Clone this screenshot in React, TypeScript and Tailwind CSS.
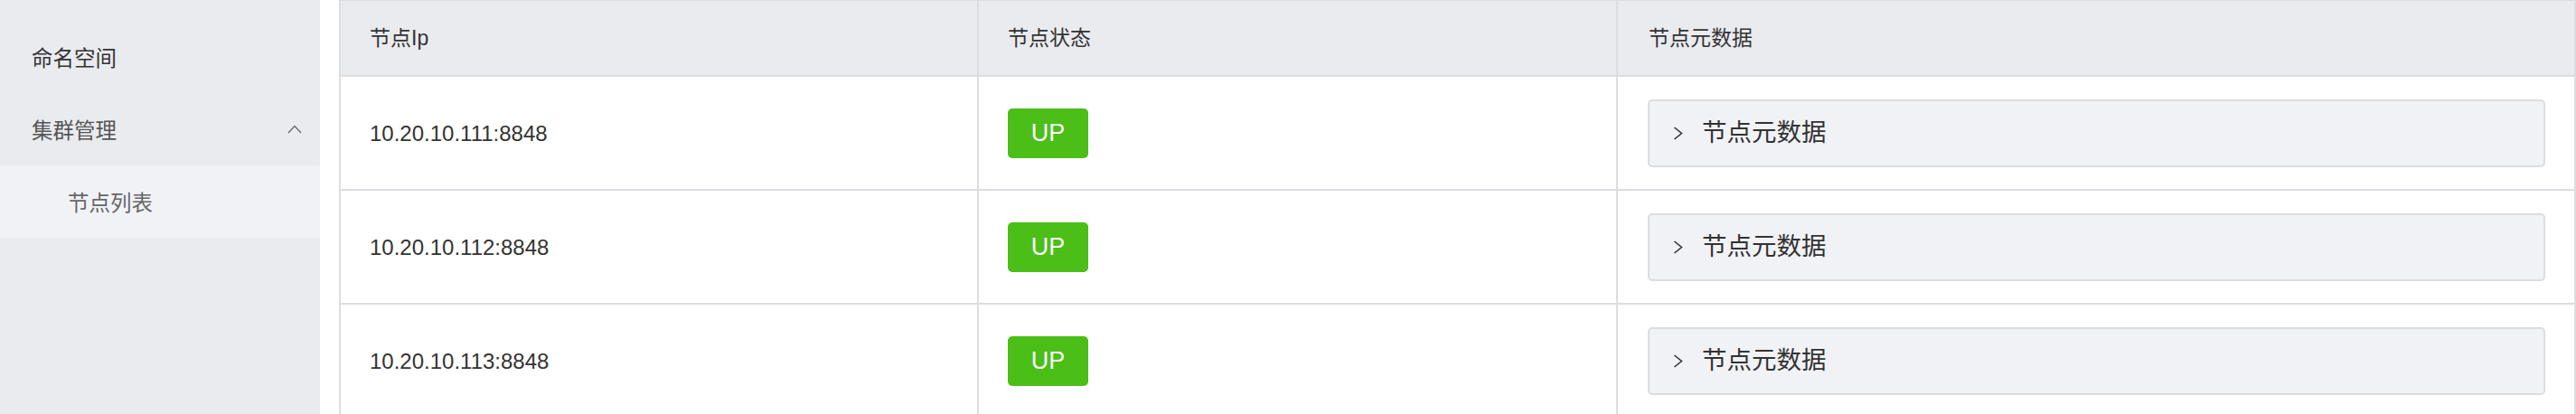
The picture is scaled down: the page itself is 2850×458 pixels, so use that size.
import React from "react";

const font = { fontFamily: '"Liberation Sans", "Noto Sans CJK SC", sans-serif' };

const rows = ["10.20.10.111:8848", "10.20.10.112:8848", "10.20.10.113:8848"];

function ChevronUp() {
  return (
    <svg width="16" height="10" viewBox="0 0 16 10" fill="none">
      <path d="M1 9 L8 1.5 L15 9" stroke="#6b6b6b" strokeWidth="1.4" />
    </svg>
  );
}

function ChevronRight() {
  return (
    <svg width="11" height="15" viewBox="0 0 11 15" fill="none">
      <path d="M1.5 1 L9.5 7.5 L1.5 14" stroke="#333" strokeWidth="1.6" />
    </svg>
  );
}

export default function App() {
  return (
    <div className="flex h-[458px] w-[2850px] overflow-hidden bg-white text-[#333]" style={font}>
      <aside className="w-[354px] shrink-0 bg-[#e9ebef] pt-[23px]">
        <div className="flex h-[80px] items-center pl-[35px] pt-[5px] text-[23.5px] text-[#333]">命名空间</div>
        <div className="flex h-[80px] items-center justify-between pl-[35px] pr-[20px] pt-[5px] text-[23.5px] text-[#555]">
          <span>集群管理</span>
          <span className="-mt-[6px]"><ChevronUp /></span>
        </div>
        <div className="flex h-[80px] items-center bg-[#f1f2f6] pl-[75px] pt-[5px] text-[23.5px] text-[#666]">节点列表</div>
      </aside>
      <main className="ml-[21px] flex-1">
        <div className="border-r-2 border-[#dcdde2]">
          <div className="grid grid-cols-[706px_707px_1fr] border-t border-b-2 border-[#dcdde2] bg-[#eaebef]">
            <div className="flex h-[82px] items-center border-l-2 border-[#dcdde2] pl-[32px] text-[23px] text-[#333]">节点Ip</div>
            <div className="flex h-[82px] items-center border-l-2 border-[#dcdde2] pl-[32px] text-[23px] text-[#333]">节点状态</div>
            <div className="flex h-[82px] items-center border-l-2 border-[#dcdde2] pl-[34px] text-[23px] text-[#333]">节点元数据</div>
          </div>
          {rows.map((ip) => (
            <div key={ip} className="grid grid-cols-[706px_707px_1fr] border-b-2 border-[#dcdde2] bg-white">
              <div className="flex h-[124px] items-center border-l-2 border-[#dcdde2] pl-[32px] pt-[2px] text-[24px] text-[#333]">{ip}</div>
              <div className="flex h-[124px] items-center border-l-2 border-[#dcdde2] pl-[32px]">
                <span className="flex h-[55px] w-[89px] items-center justify-center rounded-[5px] bg-[#4bbe17] text-[27px] text-white">UP</span>
              </div>
              <div className="flex h-[124px] items-center border-l-2 border-[#dcdde2] pl-[33px] pr-[32px]">
                <div className="flex h-[75px] w-full items-center gap-[21px] rounded-[5px] border-2 border-[#dcdde2] bg-[#f1f2f6] pl-[26px] text-[27.5px] text-[#333]">
                  <ChevronRight />
                  <span>节点元数据</span>
                </div>
              </div>
            </div>
          ))}
        </div>
      </main>
    </div>
  );
}
